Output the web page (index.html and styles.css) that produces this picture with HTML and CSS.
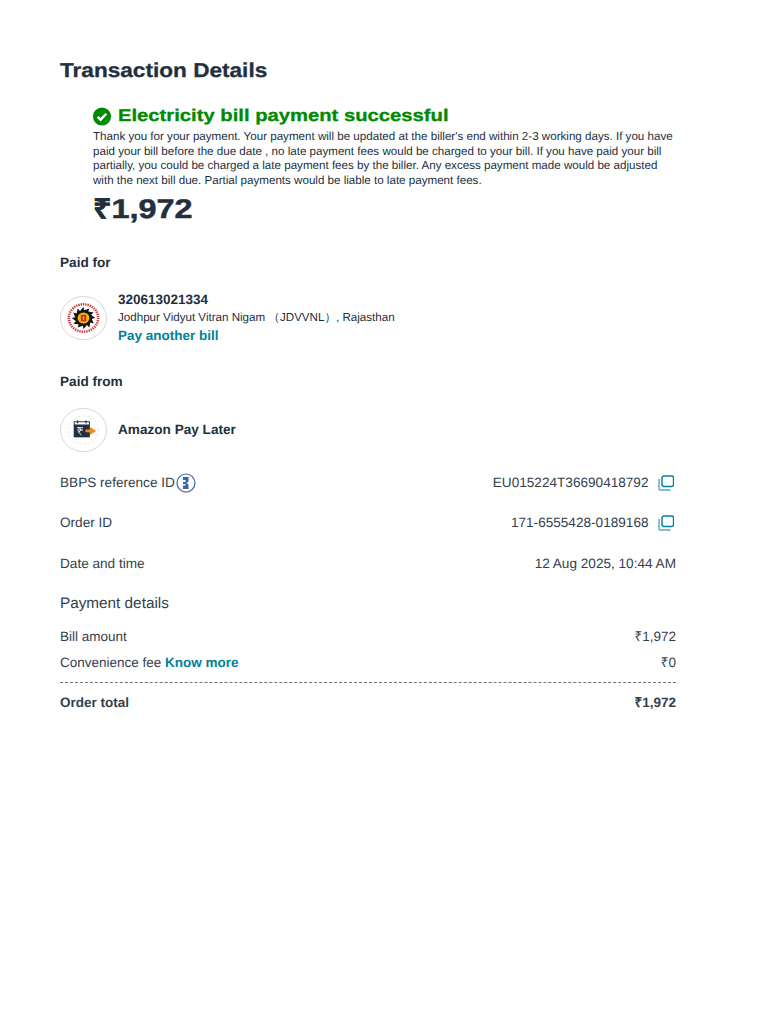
FILE: index.html
```html
<!DOCTYPE html>
<html lang="en">
<head>
<meta charset="utf-8">
<title>Transaction Details</title>
<link rel="stylesheet" href="styles.css">
</head>
<body>
<main class="page">
  <h1 class="title wide">Transaction Details</h1>
  <section class="status">
    <div class="status-head">
      <svg class="check" viewBox="0 0 20 20" aria-hidden="true"><circle cx="10" cy="10" r="9.5" fill="#008a00"/><path d="M5.400 10.300l3.100 3 6-6.200" fill="none" stroke="#fff" stroke-width="2.600"/></svg>
      <span class="status-text wide">Electricity bill payment successful</span>
    </div>
    <p class="status-note">Thank you for your payment. Your payment will be updated at the biller's end within 2-3 working days. If you have paid your bill before the due date , no late payment fees would be charged to your bill. If you have paid your bill partially, you could be charged a late payment fees by the biller. Any excess payment made would be adjusted with the next bill due. Partial payments would be liable to late payment fees.</p>
    <div class="amount wide">₹1,972</div>
  </section>

  <h2 class="label label-for">Paid for</h2>
  <div class="party party-bill">
    <svg class="logo" viewBox="0 0 48 48" preserveAspectRatio="none" aria-hidden="true">
      <circle cx="24" cy="24" r="23.5" fill="#fff" stroke="#d5d5d5"/>
      <circle cx="24" cy="24" r="15" fill="none" stroke="#c8323a" stroke-width="2.600" stroke-dasharray="1.400 1"/>
      <polygon points="36,24 32.500,24.700 34.400,30 31,28.900 30,34.400 27.600,31.700 24,36 23.300,32.500 18,34.400 19.100,31 13.600,30 16.300,27.600 12,24 15.500,23.300 13.600,18 17,19.100 18,13.600 20.400,16.300 24,12 24.700,15.500 30,13.600 28.900,17 34.400,18 31.700,20.400" fill="#16130f"/>
      <circle cx="24" cy="24" r="6" fill="#f2b705"/>
      <rect x="21.300" y="20.500" width="5.400" height="7" fill="#c8232c"/>
      <rect x="23.200" y="22" width="1.600" height="4" fill="#f2b705"/>
    </svg>
    <div class="bill-info">
      <div class="bill-number">320613021334</div>
      <div class="biller">Jodhpur Vidyut Vitran Nigam （JDVVNL）, Rajasthan</div>
      <a class="link link-pay" href="#">Pay another bill</a>
    </div>
  </div>

  <h2 class="label label-from">Paid from</h2>
  <div class="party party-source">
    <svg class="logo" viewBox="0 0 48 48" preserveAspectRatio="none" aria-hidden="true">
      <circle cx="24" cy="24" r="23.5" fill="#fff" stroke="#d5d5d5"/>
      <circle cx="24" cy="24" r="15.500" fill="none" stroke="#d8d8d8" stroke-dasharray="1.500 3"/>
      <rect x="14.500" y="15" width="15.500" height="3.500" fill="#fff" stroke="#232f3e" stroke-width="1"/>
      <rect x="14" y="18.500" width="16.500" height="13.500" fill="#232f3e"/>
      <path d="M18 13.500v3M26.500 13.500v3" stroke="#232f3e" stroke-width="1.400"/>
      <path d="M17.500 21.500h6M17.500 24h6M18.500 21.500c3.500 0 3.500 4.500 0 4.500l3.500 3.500" fill="none" stroke="#fff" stroke-width="1"/>
      <path d="M26 23.500h4.500v-3l6.500 4.500-6.500 4.500v-3h-4.500z" fill="#f08c1e"/>
    </svg>
    <div class="source-name">Amazon Pay Later</div>
  </div>

  <div class="meta">
    <div class="row">
      <div class="row-label">BBPS reference ID<svg class="bbps" viewBox="0 0 20 20" aria-hidden="true"><circle cx="10" cy="10" r="9" fill="#fff" stroke="#3565ad" stroke-width="1.200"/><path d="M3.500 16.700a9.500 9.500 0 0 0 13 0" fill="none" stroke="#e2873a" stroke-width="1" stroke-dasharray="1.500 1"/><path d="M7 4h5.500v4.500l-2 1.500 2 1.500V16H7v-3.500h2.500v-1.500H7V9h2.500V7H7z" fill="#3565ad"/></svg></div>
      <div class="row-value">EU015224T36690418792<svg class="copy" viewBox="0 0 16 16" aria-hidden="true"><rect x="4" y="1" width="11.500" height="10.500" rx="2" fill="none" stroke="#00829a" stroke-width="1.400"/><path d="M1 4v9.500a1.500 1.500 0 0 0 1.500 1.500h10" fill="none" stroke="#5aa9b8" stroke-width="1.400"/></svg></div>
    </div>
    <div class="row">
      <div class="row-label">Order ID</div>
      <div class="row-value">171-6555428-0189168<svg class="copy" viewBox="0 0 16 16" aria-hidden="true"><rect x="4" y="1" width="11.500" height="10.500" rx="2" fill="none" stroke="#00829a" stroke-width="1.400"/><path d="M1 4v9.500a1.500 1.500 0 0 0 1.500 1.500h10" fill="none" stroke="#5aa9b8" stroke-width="1.400"/></svg></div>
    </div>
    <div class="row">
      <div class="row-label">Date and time</div>
      <div class="row-value">12 Aug 2025, 10:44 AM</div>
    </div>
  </div>

  <h2 class="details-title">Payment details</h2>
  <div class="line"><span>Bill amount</span><span>₹1,972</span></div>
  <div class="line"><span>Convenience fee <a class="link" href="#">Know more</a></span><span>₹0</span></div>
  <div class="line line-total"><span>Order total</span><span>₹1,972</span></div>
</main>
</body>
</html>
```
FILE: styles.css
```css
* { box-sizing: border-box; }
html, body { margin: 0; background: #fff; }
body {
  font-family: "Liberation Sans", Arial, sans-serif;
  color: #232f3e;
  font-size: 14px;
  line-height: 20px;
  text-rendering: geometricPrecision;
}
.page { width: 768px; padding: 60px 92px 0 60px; }
.wide { transform-origin: left center; }
.title {
  margin: 0;
  font-size: 20px;
  line-height: 22px;
  font-weight: 700;
  transform: scaleX(1.130);
  -webkit-text-stroke: 0.3px currentColor;
}
.status { margin: 23px 0 0 32px; }
.status-head { display: flex; align-items: center; gap: 6px; height: 22px; }
.check { width: 20px; height: 19px; flex: none; }
.status-text {
  color: #008a00;
  font-size: 17px;
  font-weight: 700;
  transform: scaleX(1.190);
  -webkit-text-stroke: 0.3px currentColor;
}
.status-note { margin: 3px 0 0 1px; font-size: 11.600px; line-height: 14.600px; width: 585px; }
.amount {
  margin: 5px 0 0 1px;
  font-size: 27px;
  line-height: 32px;
  font-weight: 700;
  transform: scaleX(1.200);
  -webkit-text-stroke: 0.5px currentColor;
}
.label { margin: 0; font-size: 13.600px; line-height: 18px; font-weight: 700; }
.label-for { margin-top: 29px; }
.label-from { margin-top: 28px; }
.party { display: flex; align-items: center; gap: 11px; }
.party-bill { margin-top: 19px; }
.party-source { margin-top: 17px; }
.logo { width: 47px; height: 44px; flex: none; }
.bill-info { display: flex; flex-direction: column; }
.bill-number { font-size: 13.500px; line-height: 18px; font-weight: 700; }
.biller { font-size: 11.600px; line-height: 18px; }
.link { color: #00829a; font-weight: 700; text-decoration: none; }
.link-pay { font-size: 13.500px; line-height: 18px; }
.source-name { font-size: 13.600px; font-weight: 700; }
.meta { margin-top: 10px; color: #333f4d; }
.row { display: flex; justify-content: space-between; align-items: center; height: 40.500px; font-size: 13.600px; }
.row-label, .row-value { display: flex; align-items: center; }
.bbps { width: 20px; height: 20px; margin-left: 1px; }
.copy { width: 16px; height: 16px; margin-left: 9.500px; margin-right: 2px; }
.details-title { margin: 10.500px 0 0; font-size: 15.300px; line-height: 20px; font-weight: 400; color: #333f4d; }
.line { display: flex; justify-content: space-between; font-size: 13.500px; line-height: 18px; margin-top: 8px; color: #333f4d; }
.details-title + .line { margin-top: 14px; }
.line-total {
  margin-top: 10px;
  padding-top: 11px;
  border-top: 1px dashed #6b7280;
  font-weight: 700;
}
```
